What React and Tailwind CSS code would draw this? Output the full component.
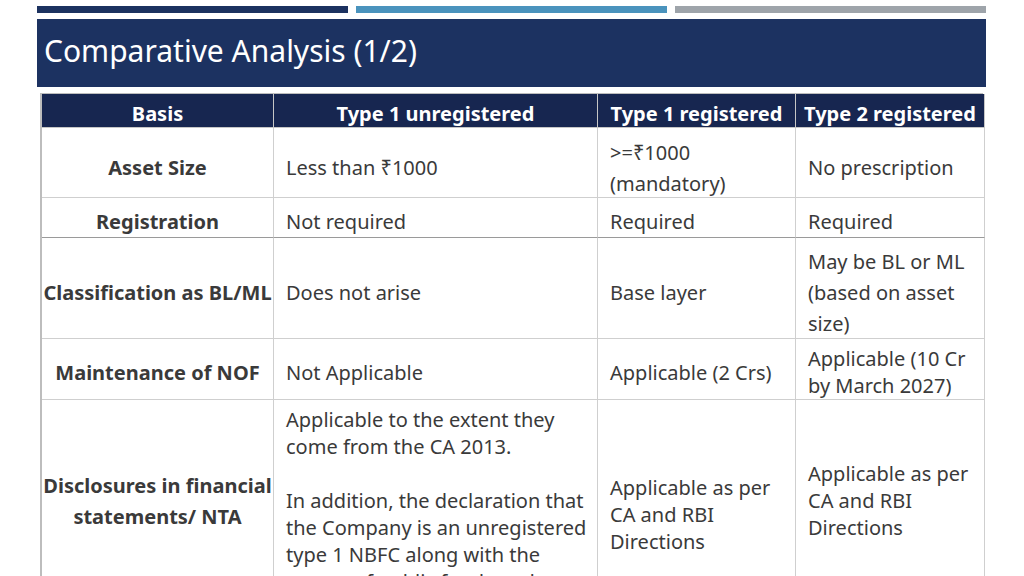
import React from 'react'

const font = { fontFamily: '"Noto Sans", "Open Sans", sans-serif' }

const headers = ['Basis', 'Type 1 unregistered', 'Type 1 registered', 'Type 2 registered']

function Cell({ children, label, className = '' }) {
  return (
    <div
      className={`flex items-center border-r border-b border-[#cfcfcf] text-[20px] text-[#3a3a3a] ${
        label ? 'justify-center text-center font-bold px-1' : 'pl-[12px] pr-2'
      } ${className}`}
    >
      {children}
    </div>
  )
}

export default function App() {
  return (
    <div className="w-[1024px] h-[576px] overflow-hidden bg-white" style={font}>
      <div className="w-[949px] ml-[37px] pt-[6px]">
        {/* Top bars */}
        <div className="flex gap-[8px]">
          <div className="h-[7px] flex-1 bg-[#1c3260]" />
          <div className="h-[7px] flex-1 bg-[#4a93bd]" />
          <div className="h-[7px] flex-1 bg-[#9ea4aa]" />
        </div>

        {/* Title banner */}
        <div className="mt-[6px] h-[68px] bg-[#1c3261] flex items-center pl-[7px] pb-[4px]">
          <h1 className="text-[30px] text-white font-normal leading-none">Comparative Analysis (1/2)</h1>
        </div>

        {/* Table */}
        <div className="mx-[3px] mt-[6px] grid grid-cols-[232px_324px_198px_189px] border-l-2 border-t border-[#bdbdbd]">
          {headers.map((h) => (
            <div
              key={h}
              className="h-[34px] flex items-center justify-center pt-[6px] bg-[#172650] border-r border-b border-[#c6c6c6] text-white font-bold text-[20px] whitespace-nowrap"
            >
              {h}
            </div>
          ))}

          {/* Asset Size */}
          <Cell label className="h-[70px] pt-[10px]">Asset Size</Cell>
          <Cell className="h-[70px] pt-[10px]">Less than ₹1000</Cell>
          <Cell className="h-[70px] pt-[10px] leading-[31px]">&gt;=₹1000<br />(mandatory)</Cell>
          <Cell className="h-[70px] pt-[10px]">No prescription</Cell>

          {/* Registration */}
          <Cell label className="h-[40px] pt-[9px] border-b-[#9a9a9a]">Registration</Cell>
          <Cell className="h-[40px] pt-[9px] border-b-[#9a9a9a]">Not required</Cell>
          <Cell className="h-[40px] pt-[9px] border-b-[#9a9a9a]">Required</Cell>
          <Cell className="h-[40px] pt-[9px] border-b-[#9a9a9a]">Required</Cell>

          {/* Classification */}
          <Cell label className="h-[101px] pt-[9px] whitespace-nowrap">Classification as BL/ML</Cell>
          <Cell className="h-[101px] pt-[9px]">Does not arise</Cell>
          <Cell className="h-[101px] pt-[9px]">Base layer</Cell>
          <Cell className="h-[101px] pt-[8px] leading-[31px]">May be BL or ML<br />(based on asset<br />size)</Cell>

          {/* NOF */}
          <Cell label className="h-[61px] pt-[8px]">Maintenance of NOF</Cell>
          <Cell className="h-[61px] pt-[7px]">Not Applicable</Cell>
          <Cell className="h-[61px] pt-[7px]">Applicable (2 Crs)</Cell>
          <Cell className="h-[61px] pt-[6px] leading-[27px]">Applicable (10 Cr<br />by March 2027)</Cell>

          {/* Disclosures */}
          <Cell label className="h-[202px] leading-[31px] whitespace-nowrap">
            Disclosures in financial<br />statements/ NTA
          </Cell>
          <div className="h-[202px] border-r border-b border-[#cfcfcf] pl-[12px] pr-2 pt-[6px] text-[20px] leading-[27px] text-[#3a3a3a]">
            <p>Applicable to the extent they come from the CA 2013.</p>
            <p className="mt-[27px]">
              In addition, the declaration that the Company is an unregistered type 1 NBFC along with the
              source of public funds and customer interface
            </p>
          </div>
          <Cell className="h-[202px] leading-[27px] pt-[28px]">Applicable as per<br />CA and RBI<br />Directions</Cell>
          <Cell className="h-[202px] leading-[27px]">Applicable as per<br />CA and RBI<br />Directions</Cell>
        </div>
      </div>
    </div>
  )
}
